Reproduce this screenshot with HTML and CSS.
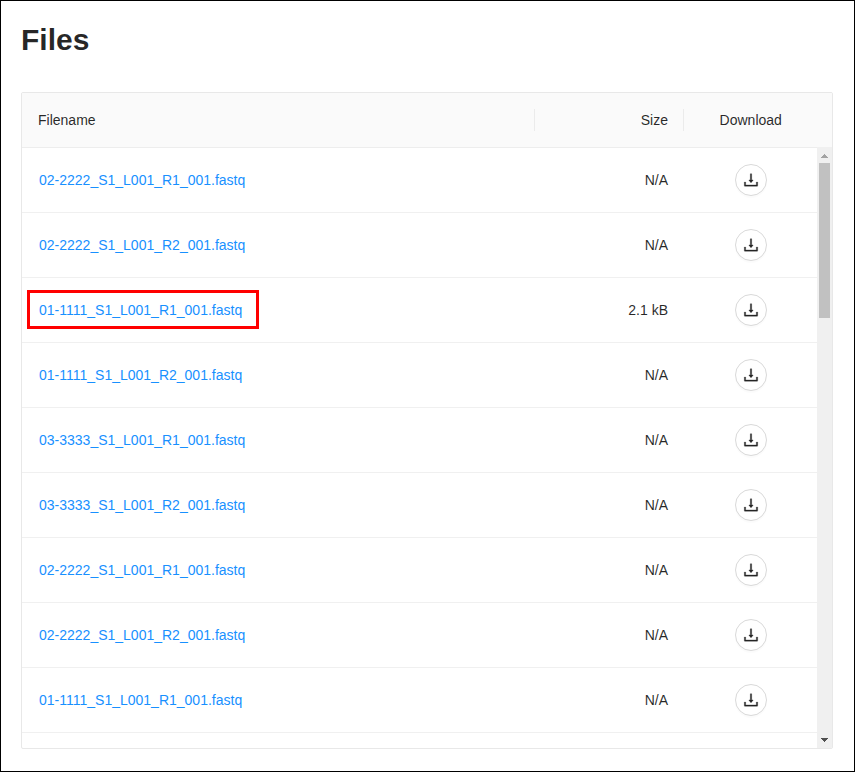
FILE: index.html
```
<!DOCTYPE html>
<html lang="en">
<head>
<meta charset="utf-8">
<title>Files</title>
<link rel="stylesheet" href="styles.css">
</head>
<body>
<svg class="defs" aria-hidden="true">
  <symbol id="download" viewBox="64 64 896 896"><path d="M505.7 661a8 8 0 0012.6 0l112-141.7c4.1-5.2.4-12.9-6.3-12.9h-74.1V168c0-4.4-3.6-8-8-8h-60c-4.4 0-8 3.6-8 8v338.3H400c-6.7 0-10.4 7.7-6.3 12.9l112 141.8zM878 626h-60c-4.4 0-8 3.6-8 8v154H214V634c0-4.4-3.6-8-8-8h-60c-4.4 0-8 3.6-8 8v198c0 17.7 14.3 32 32 32h684c17.7 0 32-14.3 32-32V634c0-4.4-3.6-8-8-8z"/></symbol>
</svg>
<main class="page">
  <h1 class="title">Files</h1>
  <section class="table">
    <div class="head grid">
      <div class="th">Filename</div>
      <div class="th size">Size</div>
      <div class="th center">Download</div>
    </div>
    <div class="body">
      <div class="rows">
        <div class="row grid"><a class="name">02-2222_S1_L001_R1_001.fastq</a><span class="size">N/A</span><button class="btn"><svg class="icon"><use href="#download"/></svg></button></div>
        <div class="row grid"><a class="name">02-2222_S1_L001_R2_001.fastq</a><span class="size">N/A</span><button class="btn"><svg class="icon"><use href="#download"/></svg></button></div>
        <div class="row grid marked"><a class="name">01-1111_S1_L001_R1_001.fastq</a><span class="size">2.1 kB</span><button class="btn"><svg class="icon"><use href="#download"/></svg></button></div>
        <div class="row grid"><a class="name">01-1111_S1_L001_R2_001.fastq</a><span class="size">N/A</span><button class="btn"><svg class="icon"><use href="#download"/></svg></button></div>
        <div class="row grid"><a class="name">03-3333_S1_L001_R1_001.fastq</a><span class="size">N/A</span><button class="btn"><svg class="icon"><use href="#download"/></svg></button></div>
        <div class="row grid"><a class="name">03-3333_S1_L001_R2_001.fastq</a><span class="size">N/A</span><button class="btn"><svg class="icon"><use href="#download"/></svg></button></div>
        <div class="row grid"><a class="name">02-2222_S1_L001_R1_001.fastq</a><span class="size">N/A</span><button class="btn"><svg class="icon"><use href="#download"/></svg></button></div>
        <div class="row grid"><a class="name">02-2222_S1_L001_R2_001.fastq</a><span class="size">N/A</span><button class="btn"><svg class="icon"><use href="#download"/></svg></button></div>
        <div class="row grid"><a class="name">01-1111_S1_L001_R1_001.fastq</a><span class="size">N/A</span><button class="btn"><svg class="icon"><use href="#download"/></svg></button></div>
      </div>
      <div class="scrollbar">
        <svg class="arrow up" viewBox="0 0 15 16" shape-rendering="crispEdges"><path d="M7 7h1v1h1v1h1v1h1v1H4v-1h1V9h1V8h1z"/></svg>
        <div class="thumb"></div>
        <svg class="arrow down" viewBox="0 0 15 16" shape-rendering="crispEdges"><path d="M4 6h7v1h-1v1H9v1H8v1H7V9H6V8H5V7H4z"/></svg>
      </div>
    </div>
  </section>
</main>
</body>
</html>
```
FILE: styles.css
```
* { box-sizing: border-box; }
body {
  margin: 0;
  background: #fff;
  color: rgba(0, 0, 0, .85);
  font: 14px/22px "Liberation Sans", Arial, sans-serif;
}
.defs { display: none; }
.page {
  height: 772px;
  padding: 20px 21px 0 20px;
  border: 1px solid #000;
}
.title {
  margin: 0 0 33px;
  font-size: 30px;
  line-height: 38px;
  font-weight: 700;
}
.table {
  width: 812px;
  height: 657px;
  border: 1px solid #e8e8e8;
  border-radius: 2px;
  overflow: hidden;
}
.grid {
  display: grid;
  grid-template-columns: 513px 149px 133px;
  align-items: center;
}
.head {
  height: 54px;
  background: #fafafa;
}
.th { padding: 0 15px 0 16px; }
.th:not(:last-child) { border-right: 1px solid #ebebeb; }
.th.center { padding: 0 0 0 .5px; text-align: center; }
.size {
  padding-right: 15px;
  text-align: right;
}
.row .size { padding-right: 16px; }
.body {
  display: flex;
  height: 601px;
}
.rows {
  width: 795px;
  border-top: 1px solid #ededed;
}
.row {
  height: 65px;
  border-bottom: 1px solid #f0f0f0;
}
.name {
  padding-left: 17px;
  color: #1890ff;
}
.marked .name {
  width: 232px;
  margin: 0 0 1px 5px;
  padding: 6px 9px 5px;
  border: 3px solid #f00;
}
.btn {
  display: flex;
  align-items: center;
  justify-content: center;
  justify-self: center;
  width: 32px;
  height: 32px;
  margin-left: 1px;
  padding: 0;
  border: 1px solid #d9d9d9;
  border-radius: 50%;
  background: #fff;
  color: #262626;
  box-shadow: 0 2px 0 rgba(0, 0, 0, .015);
}
.icon {
  width: 16px;
  height: 16px;
  fill: currentColor;
  stroke: currentColor;
  stroke-width: 16px;
}
.scrollbar {
  display: flex;
  flex-direction: column;
  width: 15px;
  background: #f0f0f0;
}
.thumb {
  width: 11px;
  height: 155px;
  margin-left: 2px;
  background: #c1c1c1;
}
.arrow {
  width: 15px;
  height: 16px;
}
.up { fill: #a3a3a3; }
.down {
  margin-top: auto;
  fill: #505050;
}
```
